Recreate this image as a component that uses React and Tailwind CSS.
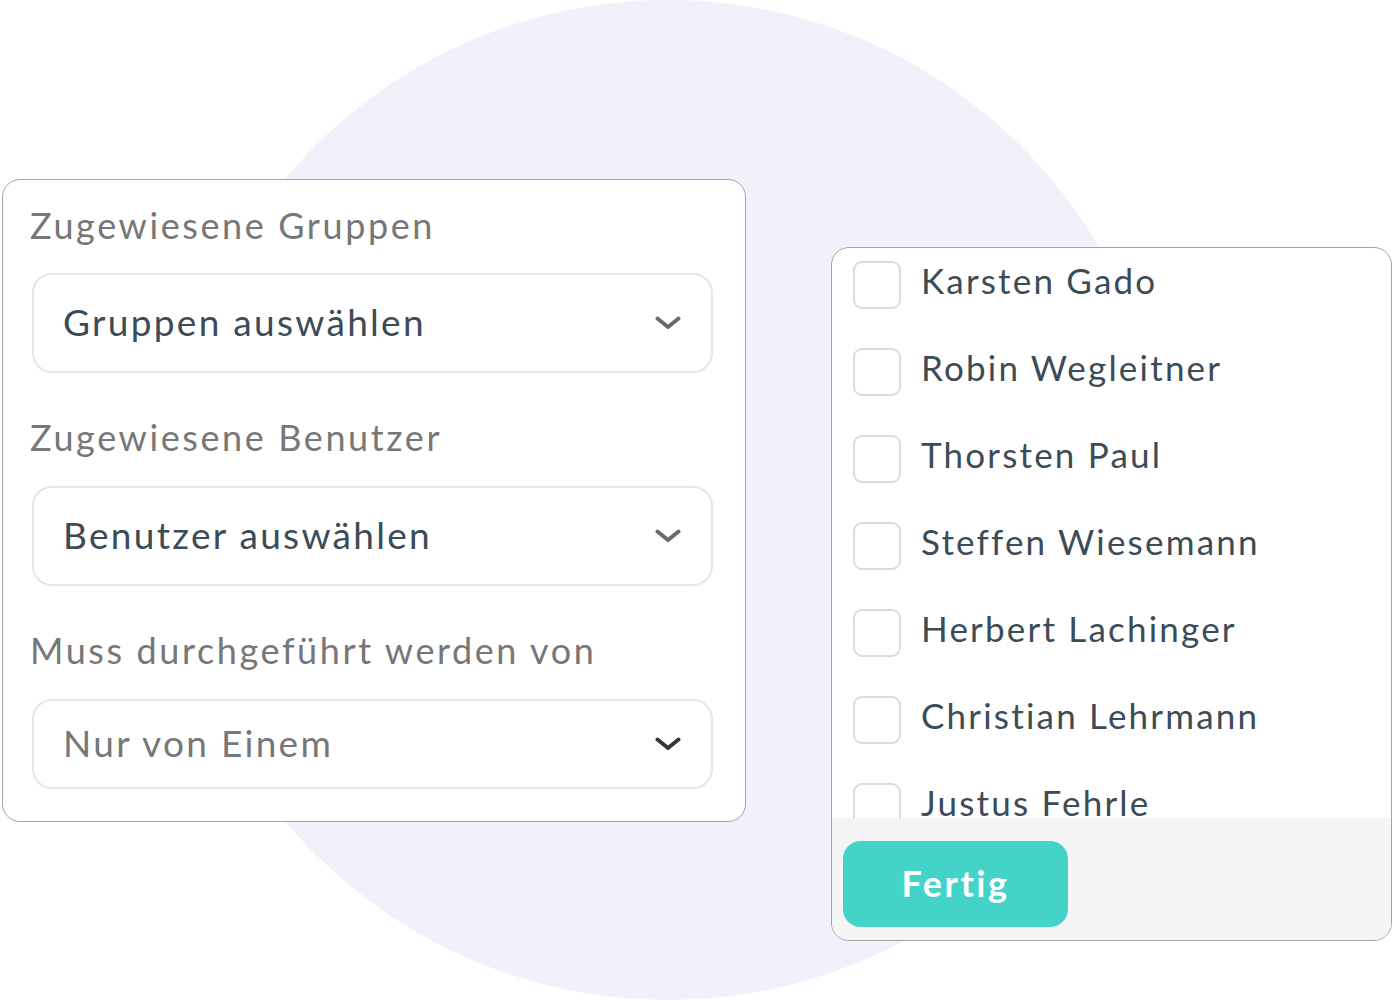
import React from 'react';

const users = [
  'Karsten Gado',
  'Robin Wegleitner',
  'Thorsten Paul',
  'Steffen Wiesemann',
  'Herbert Lachinger',
  'Christian Lehrmann',
  'Justus Fehrle',
];

const Chevron = ({ className }) => (
  <svg width="26" height="14" viewBox="0 0 26 14" fill="none" className={className}>
    <path d="M2.5 2.5 L13 11 L23.5 2.5" stroke="currentColor" strokeWidth="4" strokeLinecap="round" strokeLinejoin="round" />
  </svg>
);

const Select = ({ text, muted, dark, height = 'h-[100px]' }) => (
  <div className={`${height} w-full rounded-[20px] border-2 border-[#e6e6e6] bg-white flex items-center justify-between pl-[29px] pr-[30px]`}>
    <span className={`text-[37px] leading-none tracking-[2.3px] -mt-[3px] ${muted ? 'text-[#777777]' : 'text-[#3b4c57]'}`}>{text}</span>
    <Chevron className={dark ? 'text-[#33383b]' : 'text-[#6c6c6c]'} />
  </div>
);

const Label = ({ children }) => (
  <div className="text-[36px] leading-[46px] pb-[4px] tracking-[2.6px] text-[#777777]">{children}</div>
);

export default function App() {
  return (
    <div className="relative w-[1392px] h-[1000px] bg-white overflow-hidden" style={{ fontFamily: 'Lato, "Open Sans", sans-serif' }}>
      {/* background circle */}
      <div className="absolute left-[168px] top-0 w-[1000px] h-[1000px] rounded-full bg-[#f3f0fb]"></div>

      <div className="relative flex items-start">
        {/* Left card */}
        <div className="ml-[2px] mt-[179px] w-[744px] h-[643px] rounded-[18px] border border-[#a3a3a3] bg-white pt-[22px] pl-[27px] pr-[32px]">
          <Label>Zugewiesene Gruppen</Label>
          <div className="mt-[21px] ml-[2px]">
            <Select text="Gruppen auswählen" />
          </div>
          <div className="mt-[41px]">
            <Label>Zugewiesene Benutzer</Label>
          </div>
          <div className="mt-[22px] ml-[2px]">
            <Select text="Benutzer auswählen" />
          </div>
          <div className="mt-[41px]">
            <Label>Muss durchgeführt werden von</Label>
          </div>
          <div className="mt-[22px] ml-[2px]">
            <Select text="Nur von Einem" muted dark height="h-[90px]" />
          </div>
        </div>

        {/* Right card */}
        <div className="ml-[85px] mt-[247px] w-[561px] h-[694px] rounded-[18px] border border-[#a3a3a3] bg-white overflow-hidden flex flex-col">
          <div className="h-[570px] overflow-hidden pt-[13px] pl-[21px] flex flex-col gap-[40px] shrink-0">
            {users.map((name) => (
              <div key={name} className="flex items-center gap-[20px] h-[47px] shrink-0">
                <div className="w-[48px] h-[48px] rounded-[9px] border-2 border-[#d3dde3] bg-white shrink-0"></div>
                <span className="text-[35px] leading-none tracking-[2.2px] text-[#3b4c57] -mt-[8px]">{name}</span>
              </div>
            ))}
          </div>
          <div className="flex-1 bg-[#f5f5f5] pt-[23px] pl-[11px]">
            <button className="w-[225px] h-[86px] rounded-[18px] bg-[#44d3c9] text-white text-[36px] font-bold tracking-[2.5px] flex items-center justify-center pb-[2px]">
              Fertig
            </button>
          </div>
        </div>
      </div>
    </div>
  );
}
